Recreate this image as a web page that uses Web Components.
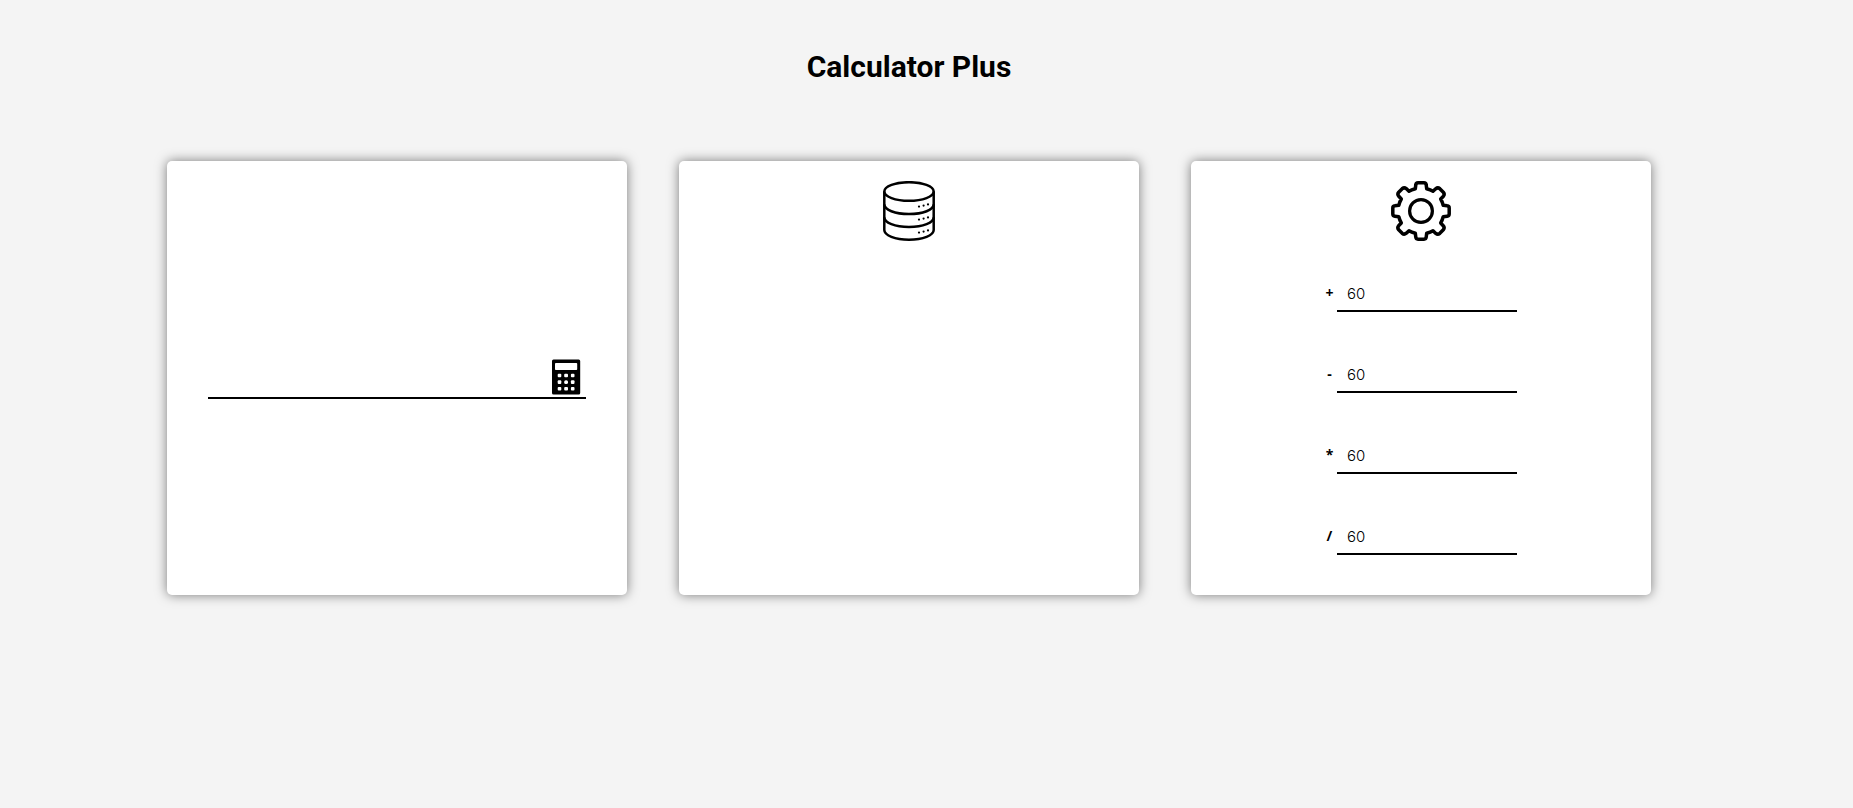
<!DOCTYPE html>
<html lang="en">
<head>
<meta charset="utf-8">
<title>Calculator Plus</title>
<style>
  body { margin: 0; background: #f4f4f4; color: #000; font-family: "Open Sans", sans-serif; font-size: 16px; }
</style>
</head>
<body>
<calculator-app></calculator-app>
<script>
  const define = (name, html) => customElements.define(name, class extends HTMLElement {
    constructor() {
      super();
      this.attachShadow({ mode: 'open' }).innerHTML = html;
    }
  });

  define('app-card', `
    <style>
      :host { display: flex; flex-direction: column; align-items: center; box-sizing: border-box;
        min-height: 434px; padding: 20px 41px 40px; background: #fff; border-radius: 5px;
        box-shadow: 0 0 12px rgba(0, 0, 0, .5); }
    </style>
    <slot></slot>`);

  define('expression-field', `
    <style>
      :host { display: block; width: 100%; margin: auto 0; padding-top: 20px; box-sizing: border-box; }
      form { display: flex; align-items: center; height: 40px; padding-right: 5px; border-bottom: 2px solid #000; }
      input { flex: 1; min-width: 0; height: 36px; padding: 0 10px; border: 0; outline: 0;
        background: none; font: inherit; }
      button { padding: 0; border: 0; background: none; cursor: pointer; }
      svg { display: block; }
    </style>
    <form onsubmit="return false">
      <input type="text" aria-label="Expression">
      <button type="submit" aria-label="Calculate">
        <svg width="29" height="36" viewBox="0 0 29 36">
          <rect y=".4" width="28.2" height="35.2" rx="1.5"/>
          <rect x="3" y="4" width="22.2" height="7" rx=".8" fill="#fff"/>
          <g fill="#fff">
            <rect x="5.7" y="14.8" width="3.6" height="3.4" rx="1"/><rect x="12.2" y="14.8" width="3.8" height="3.4" rx="1"/><rect x="18.9" y="14.8" width="3.6" height="3.4" rx="1"/>
            <rect x="5.7" y="21.2" width="3.6" height="3.8" rx="1"/><rect x="12.2" y="21.2" width="3.8" height="3.8" rx="1.6"/><rect x="18.9" y="21.2" width="3.6" height="3.8" rx="1"/>
            <rect x="5.7" y="28" width="3.6" height="3.6" rx="1"/><rect x="12.2" y="28" width="3.8" height="3.6" rx="1"/><rect x="18.9" y="28" width="3.6" height="3.6" rx="1"/>
          </g>
        </svg>
      </button>
    </form>`);

  define('database-icon', `
    <style>:host, svg { display: block; }</style>
    <svg width="60" height="60" viewBox="0 0 60 60" fill="none" stroke="#000" stroke-width="2.5" aria-hidden="true">
      <ellipse cx="30" cy="10.5" rx="24.7" ry="9.3"/>
      <path d="M5.3 10.5V49C5.3 54.4 16 58.7 30 58.7S54.7 54.4 54.7 49V10.5"/>
      <path d="M5.3 23.3C5.3 28.8 16 33 30 33S54.7 28.8 54.7 23.3M5.3 36.2C5.3 41.7 16 45.9 30 45.9S54.7 41.7 54.7 36.2"/>
      <g fill="#000" stroke="none">
        <circle cx="40" cy="25.6" r="1.1"/><circle cx="44.6" cy="24.6" r="1.1"/><circle cx="49" cy="23.4" r="1.1"/>
        <circle cx="40" cy="38.6" r="1.1"/><circle cx="44.6" cy="37.6" r="1.1"/><circle cx="49" cy="36.4" r="1.1"/>
        <circle cx="40" cy="51.6" r="1.1"/><circle cx="44.6" cy="50.6" r="1.1"/><circle cx="49" cy="49.4" r="1.1"/>
      </g>
    </svg>`);

  const tooth = 'M30 1.8H33Q35 1.8 35.2 3.8L35.7 7.8Q39.5 8.8 42 10.3L44.7 7.8Q46.8 6 48.8 7.7L52.3 11.2Q54 13.2 52.4 15.2L49.7 18Q51.2 20.5 52.2 24.3L56.2 24.8Q58.2 25 58.2 27V30';
  define('settings-icon', `
    <style>:host, svg { display: block; }</style>
    <svg width="60" height="60" viewBox="0 0 60 60" fill="none" stroke="#000" stroke-width="3.5" stroke-linejoin="round" aria-hidden="true">
      ${[0, 90, 180, 270].map(a => `<path d="${tooth}" transform="rotate(${a} 30 30)"/>`).join('')}
      <circle cx="30" cy="30" r="11.4" stroke-width="3.2"/>
    </svg>`);

  customElements.define('limit-field', class extends HTMLElement {
    connectedCallback() {
      this.attachShadow({ mode: 'open' }).innerHTML = `
        <style>
          :host { display: flex; align-items: center; }
          label { box-sizing: border-box; width: 12px; padding: 2px 3px 0 0; text-align: center;
            font-size: 14px; line-height: 20px; font-weight: 700; }
          input { box-sizing: border-box; width: 180px; height: 40px; padding: 4px 10px 0; border: 0;
            border-bottom: 2px solid #000; outline: 0; background: none; color: #000;
            font: 300 15px Inter, sans-serif; }
        </style>
        <label for="value">${this.getAttribute('operator')}</label>
        <input id="value" type="text" value="${this.getAttribute('value')}">`;
    }
  });

  define('limit-list', `
    <style>
      :host { display: grid; gap: 41px; margin-top: 31px; }
    </style>
    <limit-field operator="+" value="60"></limit-field>
    <limit-field operator="-" value="60"></limit-field>
    <limit-field operator="*" value="60"></limit-field>
    <limit-field operator="/" value="60"></limit-field>`);

  define('calculator-app', `
    <style>
      :host { display: block; padding: 43px 35px 60px 0; }
      h1 { margin: 0 0 70px; font: 700 30px/48px Roboto, sans-serif; text-align: center; }
      main { display: grid; grid-template-columns: repeat(3, minmax(0, 1fr)); gap: 52px; padding: 0 167px; }
    </style>
    <h1>Calculator Plus</h1>
    <main>
      <app-card><expression-field></expression-field></app-card>
      <app-card><database-icon></database-icon></app-card>
      <app-card><settings-icon></settings-icon><limit-list></limit-list></app-card>
    </main>`);
</script>
</body>
</html>
